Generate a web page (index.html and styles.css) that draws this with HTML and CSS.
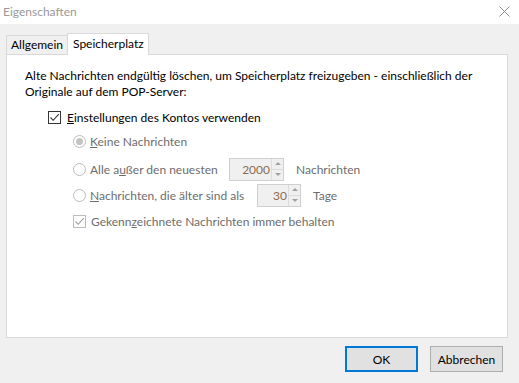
FILE: index.html
```html
<!DOCTYPE html>
<html lang="de">
<head>
<meta charset="utf-8">
<title>Eigenschaften</title>
<link rel="stylesheet" href="styles.css">
</head>
<body>
<div class="window">
  <div class="titlebar">
    <span class="title">Eigenschaften</span>
    <svg class="close" width="11" height="11" viewBox="0 0 11 11"><path d="M0.5 0.5 L10.5 10.5 M10.5 0.5 L0.5 10.5" stroke="#8a8a8a" stroke-width="1" fill="none"/></svg>
  </div>
  <div class="main">
    <div class="tabs">
      <div class="tab">Allgemein</div>
      <div class="tab active">Speicherplatz</div>
    </div>
    <div class="panel">
      <p class="intro">Alte Nachrichten endgültig löschen, um Speicherplatz freizugeben - einschließlich der<br>Originale auf dem POP-Server:</p>
      <div class="row row-main">
        <span class="check on"><svg width="11" height="11" viewBox="0 0 11 11"><path d="M1.5 5.5 L4.2 8.3 L9.8 2.2" stroke="#333" stroke-width="1.1" fill="none"/></svg></span>
        <span class="lbl"><u>E</u>instellungen des Kontos verwenden</span>
      </div>
      <div class="row row-k">
        <span class="radio sel"></span>
        <span class="lbl dis"><u>K</u>eine Nachrichten</span>
      </div>
      <div class="row row-spin1">
        <span class="radio"></span>
        <span class="lbl dis w1">Alle a<u>u</u>ßer den neuesten</span>
        <span class="spin s1"><span class="val">2000</span><span class="arrows"><span class="up"></span><span class="down"></span></span></span>
        <span class="lbl dis after">Nachrichten</span>
      </div>
      <div class="row row-spin2">
        <span class="radio"></span>
        <span class="lbl dis w2"><u>N</u>achrichten, die älter sind als</span>
        <span class="spin s2"><span class="val">30</span><span class="arrows"><span class="up"></span><span class="down"></span></span></span>
        <span class="lbl dis after">Tage</span>
      </div>
      <div class="row row-g">
        <span class="check sub"><svg width="11" height="11" viewBox="0 0 11 11"><path d="M1.5 5.5 L4.2 8.3 L9.8 2.2" stroke="#a0a0a0" stroke-width="1.1" fill="none"/></svg></span>
        <span class="lbl dis">Gekenn<u>z</u>eichnete Nachrichten immer behalten</span>
      </div>
    </div>
    <div class="footer">
      <button class="btn default">OK</button>
      <button class="btn">Abbrechen</button>
    </div>
  </div>
</div>
</body>
</html>
```
FILE: styles.css
```css
* { box-sizing: border-box; }
html, body { margin: 0; padding: 0; }
body {
  width: 519px;
  height: 383px;
  overflow: hidden;
  font-family: "Lato", "Noto Sans", sans-serif;
  font-size: 12px;
  color: #000;
}
.window { width: 519px; height: 383px; display: flex; flex-direction: column; }
.titlebar {
  height: 24px;
  background: #fff;
  display: flex;
  align-items: center;
  justify-content: space-between;
  padding: 0 9px 1px 3px;
}
.title { color: #999; font-size: 12px; }
.close { display: block; }
.main {
  flex: 1;
  background: #f0f0f0;
  display: flex;
  flex-direction: column;
}
.tabs {
  display: flex;
  align-items: flex-end;
  padding: 8px 0 0 6px;
  height: 30px;
  position: relative;
  z-index: 1;
}
.tab {
  height: 19px;
  padding: 0 4px 0 4px;
  border: 1px solid #d9d9d9;
  border-bottom: none;
  background: #f0f0f0;
  line-height: 17px;
  width: 62px;
}
.tab.active {
  height: 22px;
  width: 82px;
  background: #fff;
  margin-bottom: -1px;
  margin-left: -1px;
  line-height: 19px;
  padding-left: 5px;
}
.panel {
  margin: 0 11px 0 6px;
  height: 284px;
  background: #fff;
  border: 1px solid #d9d9d9;
  padding: 13px 12px 0 18px;
}
.intro { margin: 0; line-height: 16px; white-space: nowrap; }
.row { display: flex; align-items: center; }
.row-main { margin-top: 9px; height: 16px; padding-left: 23px; }
.row-k { margin-top: 8px; height: 16px; padding-left: 48px; }
.row-spin1 { margin-top: 8px; height: 24px; padding-left: 48px; }
.row-spin2 { margin-top: 2px; height: 24px; padding-left: 48px; }
.row-g { margin-top: 6px; height: 16px; padding-left: 48px; }
.check {
  width: 13px; height: 13px;
  border: 1px solid #333;
  background: #fff;
  display: flex; align-items: center; justify-content: center;
  margin-right: 6px;
}
.check.sub { border-color: #bcbcbc; margin-right: 5px; }
.radio {
  width: 13px; height: 13px;
  border: 1px solid #bcbcbc;
  border-radius: 50%;
  background: #fff;
  margin-right: 4px;
  display: flex; align-items: center; justify-content: center;
}
.radio.sel::after {
  content: "";
  width: 7px; height: 7px;
  border-radius: 50%;
  background: #c3c3c3;
}
.lbl { white-space: nowrap; }
.dis { color: #6d6d6d; }
.w1 { width: 139px; }
.w2 { width: 167px; }
.after { margin-left: 12px; }
.spin {
  display: flex;
  height: 23px;
  border: 1px solid #cfcfcf;
  background: #f0f0f0;
}
.s1 { width: 55px; }
.s2 { width: 44px; }
.val {
  flex: 1;
  text-align: right;
  padding-right: 1px;
  line-height: 21px;
  color: #8a6d50;
}
.arrows {
  width: 12px;
  display: flex;
  flex-direction: column;
  border-left: 1px solid #dcdcdc;
}
.arrows span { flex: 1; display: flex; align-items: center; justify-content: center; }
.arrows .up { border-bottom: 1px solid #dcdcdc; }
.arrows .up::after {
  content: ""; border-left: 3px solid transparent; border-right: 3px solid transparent;
  border-bottom: 3px solid #a0a0a0;
}
.arrows .down::after {
  content: ""; border-left: 3px solid transparent; border-right: 3px solid transparent;
  border-top: 3px solid #a0a0a0;
}
.footer {
  display: flex;
  justify-content: flex-end;
  gap: 12px;
  padding: 8px 16px 0 0;
}
.btn {
  width: 73px;
  height: 26px;
  font-family: inherit;
  font-size: 12px;
  color: #000;
  background: #e1e1e1;
  border: 1px solid #adadad;
  padding: 0;
}
.btn.default { border: 2px solid #0078d7; }
```
